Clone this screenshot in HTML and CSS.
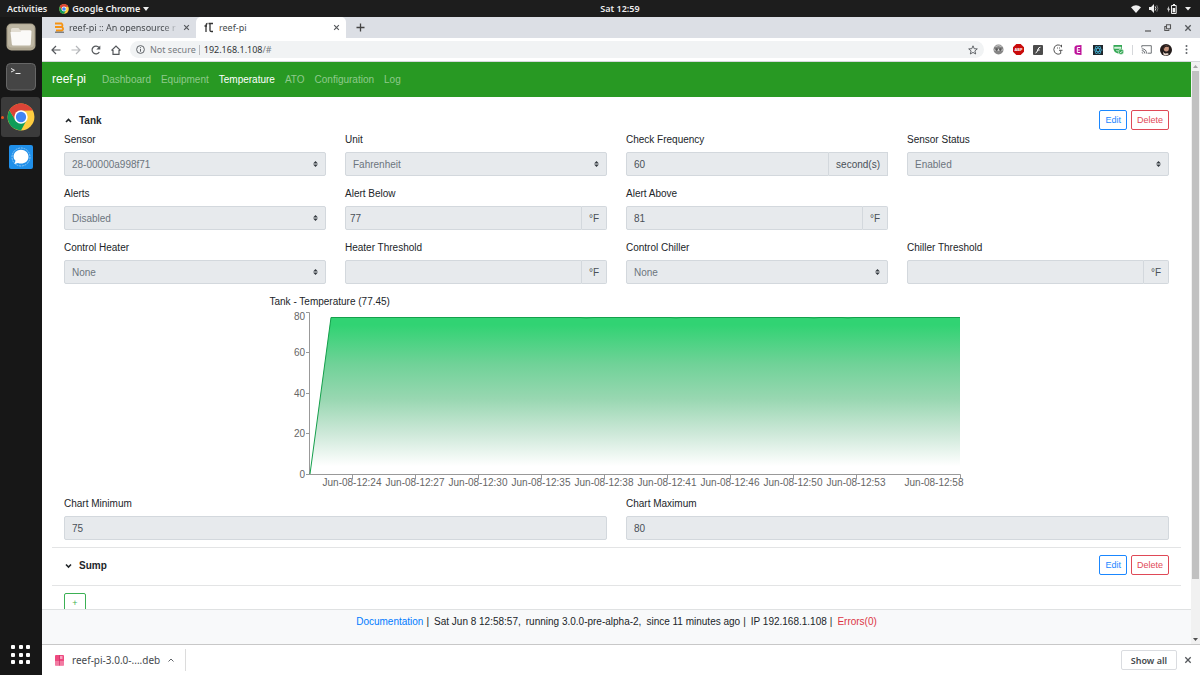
FILE: index.html
```html
<!DOCTYPE html>
<html lang="en">
<head>
<meta charset="utf-8">
<title>reef-pi</title>
<link rel="stylesheet" href="styles.css">
</head>
<body>
<svg width="0" height="0" class="defs" aria-hidden="true">
  <symbol id="chrome" viewBox="0 0 48 48">
    <circle cx="24" cy="24" r="23" fill="#ffcd40"/>
    <path d="M24 24 L4.1 12.5 A23 23 0 0 1 43.9 12.5 L24 13Z" fill="#db4437"/>
    <path d="M4.1 12.5 A23 23 0 0 0 24 47 L33.5 29.5 L24 24 L14.5 29.5Z" fill="#0f9d58"/>
    <path d="M24 13 L43.9 12.5 A23 23 0 0 0 4.1 12.5 L14.5 29.5Z" fill="#db4437"/>
    <circle cx="24" cy="24" r="11.5" fill="#fff"/>
    <circle cx="24" cy="24" r="8.8" fill="#4285f4"/>
  </symbol>
  <symbol id="close" viewBox="0 0 8 8"><path d="M1.3 1.3 6.7 6.7M6.7 1.3 1.3 6.7" stroke="currentColor" stroke-width="1.3" fill="none"/></symbol>
</svg>

<header class="topbar">
  <div class="topbar-left">
    <button class="plain">Activities</button>
    <button class="plain app-menu"><svg width="10" height="10"><use href="#chrome"/></svg>Google Chrome <svg width="6" height="4" viewBox="0 0 6 4"><path d="M0 0h6L3 4z" fill="#eee"/></svg></button>
  </div>
  <time class="clock">Sat 12:59</time>
  <div class="topbar-right">
    <svg width="10" height="8" viewBox="0 0 10 8"><path d="M0 2.3Q5-1.8 10 2.3L5 8z" fill="#eee"/></svg>
    <svg width="10" height="9" viewBox="0 0 10 9"><path d="M0 3h2l3-3v9L2 6H0z" fill="#eee"/><path d="M6.2 2.4q1.4 2 0 4.2" stroke="#ddd" fill="none"/><path d="M7.8 1.2q2.2 3.300 0 6.600" stroke="#777" fill="none"/></svg>
    <svg width="10" height="10" viewBox="0 0 10 10"><path d="M2 2 0 5.500h1.300L1 8.500l2-3.700H1.700z" fill="#eee"/><path d="M4.500 1.500h4.700v8H4.500zM6 .5h2" fill="none" stroke="#eee"/><path d="M5.600 4h2.600v4.300H5.600z" fill="#eee"/></svg>
    <svg width="6" height="4" viewBox="0 0 6 4"><path d="M0 0h6L3 3.500z" fill="#eee"/></svg>
  </div>
</header>

<div class="desktop">
  <nav class="dock" aria-label="Dock">
    <button class="dock-item" aria-label="Files"><svg width="30" height="28" viewBox="0 0 30 28"><rect x=".5" y=".5" width="29" height="27" rx="5" fill="#aca48f"/><rect x="2" y="1.500" width="26" height="23" rx="4" fill="#bdb6a3"/><path d="M5 6.500q0-1.500 1.500-1.500h6l1.500 2h9.500q1.500 0 1.500 1.500v3H5z" fill="#e2ddd2"/><path d="M4.500 9h10l1-1.500h9q1 0 1 1l-.7 12.500q0 1.500-1.500 1.500h-16q-1.500 0-1.500-1.500z" fill="#fbfaf8"/></svg></button>
    <button class="dock-item" aria-label="Terminal"><svg width="30" height="28" viewBox="0 0 30 28"><rect x=".5" y=".5" width="29" height="26.500" rx="4" fill="#454545" stroke="#666"/><path d="M5 5.500 8.500 7.300 5 9M9.500 10.500h5" stroke="#eee" fill="none"/></svg></button>
    <button class="dock-item dock-active" aria-label="Google Chrome"><svg width="28" height="28"><use href="#chrome"/></svg></button>
    <button class="dock-item" aria-label="Signal"><svg width="24" height="24" viewBox="0 0 24 24"><rect width="24" height="24" rx="2" fill="#2090ea"/><circle cx="12" cy="12" r="9" fill="none" stroke="#a6d3f7" stroke-dasharray="2 .8" stroke-width=".8"/><path d="M12 4.800c4.300 0 7.500 3 7.500 6.900s-3.200 6.900-7.500 6.900c-1.200 0-2-.1-3-.6L5.400 19l1.100-3.300c-1.200-1.200-1.900-2.400-1.900-4 0-3.900 3.100-6.900 7.400-6.900z" fill="#fff"/></svg></button>
    <button class="dock-item dock-apps" aria-label="Show Applications"><svg width="20" height="20" viewBox="0 0 20 20" fill="#fff"><rect width="4" height="4" rx="1"/><rect x="8" width="4" height="4" rx="1"/><rect x="15" width="4" height="4" rx="1"/><rect y="8" width="4" height="4" rx="1"/><rect x="8" y="8" width="4" height="4" rx="1"/><rect x="15" y="8" width="4" height="4" rx="1"/><rect y="15" width="4" height="4" rx="1"/><rect x="8" y="15" width="4" height="4" rx="1"/><rect x="15" y="15" width="4" height="4" rx="1"/></svg></button>
  </nav>

  <div class="browser">
    <div class="tabstrip">
      <div class="tab">
        <svg width="11" height="11" viewBox="0 0 11 11" fill="none" stroke="#f59414" stroke-width="1.800"><path d="M1 1.500h6.500q2 1.700 0 3.300H2M1 5h7q2.200 2 0 3.500H2"/><path d="M1 10.200h9" stroke="#555" stroke-width="1"/></svg>
        <span class="tab-title tab-fade">reef-pi :: An opensource r</span>
        <button class="plain icon" aria-label="Close tab"><svg width="7" height="7"><use href="#close"/></svg></button>
      </div>
      <div class="tab tab-active">
        <svg width="11" height="11" viewBox="0 0 11 11" fill="none" stroke="#333" stroke-width="1.300"><path d="M2 10V4M.5 4h2.500M3.500 1.500Q2 1.500 2 4M4.500 1.500H9M6 2v6.500q0 1 1.500 1H9"/></svg>
        <span class="tab-title">reef-pi</span>
        <button class="plain icon" aria-label="Close tab"><svg width="7" height="7"><use href="#close"/></svg></button>
      </div>
      <button class="plain icon new-tab" aria-label="New tab"><svg width="9" height="9" viewBox="0 0 9 9"><path d="M4.500.5v8M.5 4.500h8" stroke="#444" stroke-width="1.300"/></svg></button>
      <div class="window-buttons">
        <button class="plain icon" aria-label="Minimize"><svg width="8" height="8" viewBox="0 0 8 8"><path d="M1 7h6" stroke="#555" stroke-width="1.200"/></svg></button>
        <button class="plain icon" aria-label="Restore"><svg width="8" height="8" viewBox="0 0 8 8" fill="none" stroke="#555" stroke-width="1.100"><path d="M2.500.8h4v4h-4zM2 2.500H.8v4h4V5.500"/></svg></button>
        <button class="plain icon" aria-label="Close"><svg width="8" height="8"><use href="#close"/></svg></button>
      </div>
    </div>

    <div class="toolbar">
      <button class="plain cell" aria-label="Back"><svg width="10" height="10" viewBox="0 0 10 10" fill="none" stroke="#55585c" stroke-width="1.200"><path d="M9.500 5H1M5 1 1 5l4 4"/></svg></button>
      <button class="plain cell" aria-label="Forward"><svg width="10" height="10" viewBox="0 0 10 10" fill="none" stroke="#b5b7ba" stroke-width="1.200"><path d="M.5 5H9M5 1l4 4-4 4"/></svg></button>
      <button class="plain cell" aria-label="Reload"><svg width="10" height="10" viewBox="0 0 10 10"><path d="M8.300 7A3.900 3.900 0 1 1 8 2.500" fill="none" stroke="#55585c" stroke-width="1.200"/><path d="M9.300.5v4H5.300z" fill="#55585c"/></svg></button>
      <button class="plain cell" aria-label="Home"><svg width="10" height="10" viewBox="0 0 10 10" fill="none" stroke="#55585c" stroke-width="1.200"><path d="M.5 5.500 5 1l4.500 4.500M2 5v4.300h6V5"/></svg></button>
      <label class="omnibox">
        <svg width="9" height="9" viewBox="0 0 9 9" fill="none" stroke="#5f6368"><circle cx="4.500" cy="4.500" r="3.900"/><path d="M4.500 4v2.700M4.500 2.200v1"/></svg>
        <span class="insecure">Not secure</span>
        <span class="url"><b>192.168.1.108</b>/#</span>
        <svg width="10" height="10" viewBox="0 0 10 10"><path d="m5 .8 1.200 2.900 3.100.2-2.400 2 .8 3.100L5 7.400 2.300 9l.8-3.100-2.400-2 3.100-.2z" fill="none" stroke="#55585c" stroke-width=".9"/></svg>
      </label>
      <button class="plain cell" aria-label="Extension"><svg width="11" height="11" viewBox="0 0 11 11"><circle cx="5.500" cy="5.500" r="5" fill="#858585"/><path d="M1.500 5h8v1.800h-8z" fill="#d8d8d8"/><circle cx="3.600" cy="5.600" r="1.300" fill="#555"/><circle cx="7.400" cy="5.600" r="1.300" fill="#555"/><path d="M2.500 2.500q3-1.800 6 0" stroke="#ccc" fill="none"/></svg></button>
      <button class="plain cell" aria-label="Adblock"><svg width="11" height="11" viewBox="0 0 11 11"><path d="M3.300 0h4.400L11 3.300v4.400L7.700 11H3.300L0 7.700V3.300z" fill="#c90b0b"/><text x="5.500" y="7.300" class="glyph glyph-abp">ABP</text></svg></button>
      <button class="plain cell" aria-label="Flash"><svg width="10" height="10" viewBox="0 0 10 10"><rect width="10" height="10" rx="1" fill="#4c4c4c"/><path d="M7.500 2.200Q5.500 2.200 5 4.500 4.300 7.500 2.500 8M4.200 5h2.500" stroke="#fff" fill="none"/></svg></button>
      <button class="plain cell" aria-label="Ghost"><svg width="10" height="11" viewBox="0 0 10 11" fill="none" stroke="#444" stroke-width=".9"><path d="M8.300 2.300Q6.500.5 4 1 .8 2 .8 5.500T4 10q2 .5 3.700-.5V6.500M6 6.300h3.500M8.500.8v2.500M4.500 3.500v1M6.500 3.500v1"/></svg></button>
      <button class="plain cell" aria-label="Extension E"><svg width="8" height="10" viewBox="0 0 8 10"><path d="M2 .5 7.500 0v10L2 9.500.5 8V2z" fill="#bd1199"/><path d="M6.200 2.500H3.300v5h2.900M3.300 5h2.500" stroke="#fff" fill="none"/></svg></button>
      <button class="plain cell" aria-label="React tools"><svg width="10" height="10" viewBox="0 0 10 10"><rect width="10" height="10" fill="#20262b"/><g fill="none" stroke="#42a9c9" stroke-width=".8"><ellipse cx="5" cy="5" rx="4.200" ry="1.600"/><ellipse cx="5" cy="5" rx="4.200" ry="1.600" transform="rotate(60 5 5)"/><ellipse cx="5" cy="5" rx="4.200" ry="1.600" transform="rotate(120 5 5)"/></g></svg></button>
      <button class="plain cell" aria-label="Shield"><svg width="11" height="11" viewBox="0 0 11 11"><path d="M.5 1h8.500v4.500Q8 9 5 9.500 1 8.500.5 5z" fill="#35a855"/><path d="M1.500 3h6.500v1.500H1.500zM3 6.500q1.500 1 3 0" fill="#d6efdc" stroke="#d6efdc" stroke-width=".5"/><circle cx="8" cy="7.800" r="2.700" fill="#35a855" stroke="#fff" stroke-width=".5"/><path d="m6.800 7.800 1 1 1.500-1.800" stroke="#fff" stroke-width=".8" fill="none"/></svg></button>
      <span class="toolbar-rule"></span>
      <button class="plain cell" aria-label="Cast"><svg width="11" height="9" viewBox="0 0 11 9" fill="none" stroke="#5f6368" stroke-width=".9"><path d="M.8 2.500V.7h9.500v7.500H6.500M.8 7.500q1 0 1 1M.8 5.500q3 0 3 3M.8 3.800q4.700 0 4.700 4.700"/></svg></button>
      <button class="plain cell" aria-label="Profile"><svg width="12" height="12" viewBox="0 0 12 12"><circle cx="6" cy="6" r="6" fill="#241c1b"/><ellipse cx="6.300" cy="4.500" rx="2.600" ry="3" fill="#c99780"/><path d="M3 7.500q1.500 3 4 1.500l2 1Q6 12.500 3.500 10.500z" fill="#ead9cf"/><path d="M3 4q2-4 6-1.500L7.500 3Q5 2 4 5z" fill="#2b1f1b"/></svg></button>
      <button class="plain cell" aria-label="Menu"><svg width="3" height="9" viewBox="0 0 3 9" fill="#5f6368"><circle cx="1.500" cy="1" r="1"/><circle cx="1.500" cy="4.500" r="1"/><circle cx="1.500" cy="8" r="1"/></svg></button>
    </div>

    <div class="viewport">
      <div class="page">
        <nav class="navbar">
          <a class="brand" href="#">reef-pi</a>
          <a href="#">Dashboard</a>
          <a href="#">Equipment</a>
          <a href="#" class="current">Temperature</a>
          <a href="#">ATO</a>
          <a href="#">Configuration</a>
          <a href="#">Log</a>
        </nav>

        <main class="content">
          <section class="item item-open">
            <div class="item-head">
              <button class="plain toggle"><svg width="9" height="9" viewBox="0 0 9 9"><path d="M2 6 4.500 3.500 7 6" fill="none" stroke="#212529" stroke-width="1.600"/></svg>Tank</button>
              <button class="btn btn-primary">Edit</button>
              <button class="btn btn-danger">Delete</button>
            </div>
            <div class="grid">
              <div class="field"><label for="sensor">Sensor</label><select id="sensor" disabled><option>28-00000a998f71</option></select></div>
              <div class="field"><label for="unit">Unit</label><select id="unit" disabled><option>Fahrenheit</option></select></div>
              <div class="field"><label for="freq">Check Frequency</label><div class="group"><input id="freq" value="60" readonly><span class="addon addon-square">second(s)</span></div></div>
              <div class="field"><label for="status">Sensor Status</label><select id="status" disabled><option>Enabled</option></select></div>

              <div class="field"><label for="alerts">Alerts</label><select id="alerts" disabled><option>Disabled</option></select></div>
              <div class="field"><label for="below">Alert Below</label><div class="group"><input id="below" class="tight" value="77" readonly><span class="addon">°F</span></div></div>
              <div class="field"><label for="above">Alert Above</label><div class="group"><input id="above" value="81" readonly><span class="addon">°F</span></div></div>

              <div class="field row-start"><label for="heater">Control Heater</label><select id="heater" disabled><option>None</option></select></div>
              <div class="field"><label for="heater-t">Heater Threshold</label><div class="group"><input id="heater-t" readonly><span class="addon">°F</span></div></div>
              <div class="field"><label for="chiller">Control Chiller</label><select id="chiller" disabled><option>None</option></select></div>
              <div class="field"><label for="chiller-t">Chiller Threshold</label><div class="group"><input id="chiller-t" readonly><span class="addon">°F</span></div></div>
            </div>

            <figure class="chart">
              <figcaption>Tank - Temperature (77.45)</figcaption>
              <svg viewBox="0 0 694 187" role="img" aria-label="Temperature over time">
                <defs>
                  <linearGradient id="fade" x1="0" y1="0" x2="0" y2="1">
                    <stop offset="5%" stop-color="#31d373"/>
                    <stop offset="30%" stop-color="#70d298"/>
                    <stop offset="52%" stop-color="#98d7b1"/>
                    <stop offset="75%" stop-color="#cfe9da"/>
                    <stop offset="95%" stop-color="#fff"/>
                  </linearGradient>
                </defs>
                <path d="M40 165 61 8H690V165z" fill="url(#fade)"/>
                <path class="axis" d="M36 3.500h3.500V165.500M36 43.500h3M36 84.500h3M36 124.500h3M36 165.500H690.500v4M82.500 166v4M145.500 166v4M208.500 166v4M271.500 166v4M334.500 166v4M397.500 166v4M460.500 166v4M523.500 166v4M586.500 166v4"/>
                <path d="M40 165 61 8.500H310l6 .4 8-.4h76l6 .4 6-.4h126l6 .4 6-.4h22l6 .4 6-.4h106" fill="none" stroke="#15a04c"/>
                <g class="ticks-y"><text x="35" y="11">80</text><text x="35" y="47">60</text><text x="35" y="88">40</text><text x="35" y="128">20</text><text x="35" y="169">0</text></g>
                <g class="ticks-x"><text x="82" y="177">Jun-08-12:24</text><text x="145" y="177">Jun-08-12:27</text><text x="208" y="177">Jun-08-12:30</text><text x="271" y="177">Jun-08-12:35</text><text x="334" y="177">Jun-08-12:38</text><text x="397" y="177">Jun-08-12:41</text><text x="460" y="177">Jun-08-12:46</text><text x="523" y="177">Jun-08-12:50</text><text x="586" y="177">Jun-08-12:53</text><text x="664" y="177">Jun-08-12:58</text></g>
              </svg>
            </figure>

            <div class="grid grid-half">
              <div class="field"><label for="cmin">Chart Minimum</label><input id="cmin" value="75" readonly></div>
              <div class="field"><label for="cmax">Chart Maximum</label><input id="cmax" value="80" readonly></div>
            </div>
          </section>

          <section class="item">
            <div class="item-head">
              <button class="plain toggle"><svg width="9" height="9" viewBox="0 0 9 9"><path d="M2 3.500 4.500 6 7 3.500" fill="none" stroke="#212529" stroke-width="1.600"/></svg>Sump</button>
              <button class="btn btn-primary">Edit</button>
              <button class="btn btn-danger">Delete</button>
            </div>
          </section>

          <section class="item item-add">
            <button class="btn btn-success" aria-label="Add sensor">+</button>
          </section>
        </main>

        <footer class="footer"><a href="#">Documentation</a><span>|</span><span class="wide">Sat Jun 8 12:58:57,</span><span class="wide">running 3.0.0-pre-alpha-2,</span><span class="wide">since 11 minutes ago</span><span>|</span><span class="wide">IP 192.168.1.108</span><span>|</span><a href="#" class="errors wide">Errors(0)</a></footer>
      </div>
      <div class="scrollbar" aria-hidden="true">
        <svg width="5" height="3" viewBox="0 0 5 3"><path d="M0 3h5L2.500 0z" fill="#a3a3a3"/></svg>
        <div class="track"><div class="thumb"></div></div>
        <svg width="5" height="3" viewBox="0 0 5 3"><path d="M0 0h5L2.500 3z" fill="#505050"/></svg>
      </div>
    </div>

    <div class="downloads">
      <button class="plain download">
        <svg width="9" height="11" viewBox="0 0 9 11"><rect width="9" height="10.500" rx="1" fill="#ee4a80"/><path d="M0 6h9v4.500H0z" fill="#f27ba2"/><path d="M4.500 0v10.500" stroke="#c73468" stroke-width=".7"/><path d="M5 1h2.500v3H5z" fill="#f7a3bf"/></svg>
        reef-pi-3.0.0-....deb
        <svg width="6" height="4" viewBox="0 0 6 4"><path d="M.5 3.500 3 1l2.500 2.500" fill="none" stroke="#5f6368"/></svg>
      </button>
      <button class="show-all">Show all</button>
      <button class="plain icon" aria-label="Close downloads"><svg width="8" height="8"><use href="#close"/></svg></button>
    </div>
  </div>
</div>
</body>
</html>
```
FILE: styles.css
```css
*, *::before, *::after { box-sizing: border-box; }

body {
  margin: 0;
  height: 100vh;
  display: flex;
  flex-direction: column;
  overflow: hidden;
  font: 10px/15px "Liberation Sans", Arial, sans-serif;
  color: #212529;
  background: #fff;
}

svg { display: block; flex: none; }
.defs { position: absolute; }
a { color: #007bff; text-decoration: none; }
button, input, select { font: inherit; color: inherit; margin: 0; }
.plain { border: 0; padding: 0; background: none; }
.icon { display: flex; align-items: center; color: #55585c; }

.topbar, .tabstrip, .toolbar, .downloads {
  font-family: "Noto Sans", "Open Sans", sans-serif;
}

/* Desktop panel */
.topbar {
  flex: none;
  height: 17px;
  display: grid;
  grid-template-columns: 1fr auto 1fr;
  align-items: center;
  padding: 0 9px 0 7px;
  background: #1d1d1d;
  color: #eee;
  font-size: 9px;
  font-weight: 600;
}
.topbar-left, .topbar-right { display: flex; align-items: center; }
.topbar-left { gap: 12px; }
.app-menu { display: flex; align-items: center; gap: 3px; }
.clock { padding-left: 42px; }
.topbar-right { justify-content: flex-end; gap: 8px; }

.desktop { flex: 1; min-height: 0; display: flex; }

/* Dock */
.dock {
  flex: none;
  width: 42px;
  display: flex;
  flex-direction: column;
  background: #171717;
}
.dock-item {
  height: 40px;
  padding: 0;
  border: 0;
  display: flex;
  align-items: center;
  justify-content: center;
  background: none;
}
.dock-active {
  position: relative;
  margin: 0 2px 0 1px;
  border-radius: 3px;
  background: #3b3b3b;
}
.dock-active::before {
  content: "";
  position: absolute;
  left: 0;
  width: 3px;
  height: 3px;
  border-radius: 50%;
  background: #e95420;
}
.dock-apps { margin-top: auto; }

/* Browser chrome */
.browser { flex: 1; min-width: 0; display: flex; flex-direction: column; }

.tabstrip {
  flex: none;
  height: 21px;
  display: flex;
  align-items: center;
  padding-left: 4px;
  background: #dcdfe5;
  color: #45494d;
  font-size: 9px;
}
.tab {
  height: 21px;
  width: 150px;
  display: flex;
  align-items: center;
  gap: 4px;
  padding: 0 6px 0 8px;
}
.tab-active { background: #fff; border-radius: 5px 5px 0 0; }
.tab-title { flex: 1; overflow: hidden; white-space: nowrap; }
.tab-fade { -webkit-mask-image: linear-gradient(90deg, #000 85%, transparent); mask-image: linear-gradient(90deg, #000 85%, transparent); }
.new-tab { margin-left: 10px; }
.window-buttons { margin-left: auto; display: flex; gap: 12px; padding-right: 8px; }

.toolbar {
  flex: none;
  height: 24px;
  display: flex;
  align-items: center;
  padding: 0 4px;
  border-bottom: 1px solid #d5d7da;
  font-size: 9px;
}
.cell { width: 20px; height: 20px; display: flex; align-items: center; justify-content: center; }
.omnibox {
  flex: 1;
  min-width: 0;
  height: 17px;
  margin: 0 4px;
  padding: 0 6px;
  display: flex;
  align-items: center;
  border-radius: 9px;
  background: #f1f3f4;
  color: #777b80;
}
.insecure { margin-left: 5px; padding-right: 3px; line-height: 10px; border-right: 1px solid #b9bbbe; }
.url { flex: 1; margin-left: 4px; }
.url b { color: #303336; font-weight: 400; }
.toolbar-rule { width: 1px; height: 10px; margin: 0 3px 0 4px; background: #d5d7da; }
.glyph { fill: #fff; text-anchor: middle; font-weight: 700; }
.glyph-abp { font-size: 4px; }

/* Page area */
.viewport { flex: 1; min-height: 0; display: flex; }
.page { flex: 1; min-width: 0; display: flex; flex-direction: column; }

.navbar {
  flex: none;
  height: 35px;
  display: flex;
  align-items: center;
  gap: 10px;
  padding: 0 10px;
  background: #289923;
}
.navbar a { color: #8fca8c; }
.navbar .brand { margin-right: 6px; font-size: 12px; color: #fff; }
.navbar .current { color: #fff; }

.content { flex: 1; min-height: 0; overflow: hidden; padding: 0 10px; }
.item { padding: 7px 12px 10px; border-bottom: 1px solid #e3e4e5; }
.item-open { padding: 13px 12px 7px; }
.item-add { border-bottom: 0; }
.item-head { display: flex; align-items: center; gap: 4px; }
.toggle { display: flex; align-items: center; gap: 6px; margin-right: auto; font-weight: 700; }

.btn {
  height: 20px;
  padding: 0 5px;
  border: 1px solid;
  border-radius: 2px;
  background: #fff;
  font-size: 9px;
  line-height: 16px;
}
.btn-primary { color: #1a87ff; }
.btn-danger { color: #df4957; }
.btn-success { width: 22px; color: #3bb054; }

.grid {
  display: grid;
  grid-template-columns: repeat(4, minmax(0, 1fr));
  gap: 10px 19px;
  margin: 2px 0 10px;
}
.grid-half { grid-template-columns: repeat(2, minmax(0, 1fr)); margin: 0; }
.row-start { grid-column-start: 1; }
.field { display: flex; flex-direction: column; gap: 5px; }

input, select, .addon {
  height: 24px;
  width: 100%;
  padding: 0 7px;
  border: 1px solid #d3d8dd;
  border-radius: 2px;
  background-color: #e7eaed;
  color: #495057;
}
select {
  appearance: none;
  -webkit-appearance: none;
  opacity: 1;
  color: #6c757d;
  background-image: url("data:image/svg+xml,%3Csvg xmlns='http://www.w3.org/2000/svg' viewBox='0 0 4 5'%3E%3Cpath fill='%23343a40' d='M2 0L0 2h4zm0 5L0 3h4z'/%3E%3C/svg%3E");
  background-repeat: no-repeat;
  background-position: right 7px center;
  background-size: 5px 6px;
}
.group { display: flex; }
.group input { flex: 1; min-width: 0; border-radius: 2px 0 0 2px; }
.group .tight { padding-left: 4px; }
.addon {
  flex: none;
  width: auto;
  display: flex;
  align-items: center;
  border-left: 0;
  border-radius: 0 2px 2px 0;
}
.addon-square { border-radius: 0; }

.chart { width: 100%; max-width: 694px; margin: 0 auto; }
.chart svg { width: 100%; height: auto; overflow: visible; }
.axis { fill: none; stroke: #999; }
.ticks-x, .ticks-y { fill: #666; font-size: 10px; }
.ticks-x { text-anchor: middle; }
.ticks-y { text-anchor: end; }

.footer {
  flex: none;
  height: 35px;
  display: flex;
  justify-content: center;
  gap: 3px;
  padding-top: 4px;
  border-top: 1px solid #dfe1e2;
  background: #f8f9fa;
}
.footer .wide { margin-left: 2px; }
.footer .errors { color: #dc3545; }

.scrollbar {
  flex: none;
  width: 9px;
  display: flex;
  flex-direction: column;
  align-items: center;
  gap: 3px;
  padding: 3px 0;
  background: #f1f1f1;
}
.track { flex: 1; align-self: stretch; padding: 0 1px; }
.thumb { height: 90%; background: #c1c1c1; }

/* Downloads shelf */
.downloads {
  flex: none;
  height: 31px;
  display: flex;
  align-items: center;
  padding: 0 8px 0 13px;
  border-top: 1px solid #c8c8c8;
  color: #45494d;
  font-size: 9px;
}
.download {
  height: 22px;
  display: flex;
  align-items: center;
  gap: 8px;
  padding-right: 11px;
  border-right: 1px solid #dcdcdc;
  font-size: 10px;
}
.show-all {
  height: 20px;
  margin: 0 7px 0 auto;
  padding: 0 9px;
  border: 1px solid #dadce0;
  border-radius: 2px;
  background: #fff;
  font-weight: 600;
}
```
